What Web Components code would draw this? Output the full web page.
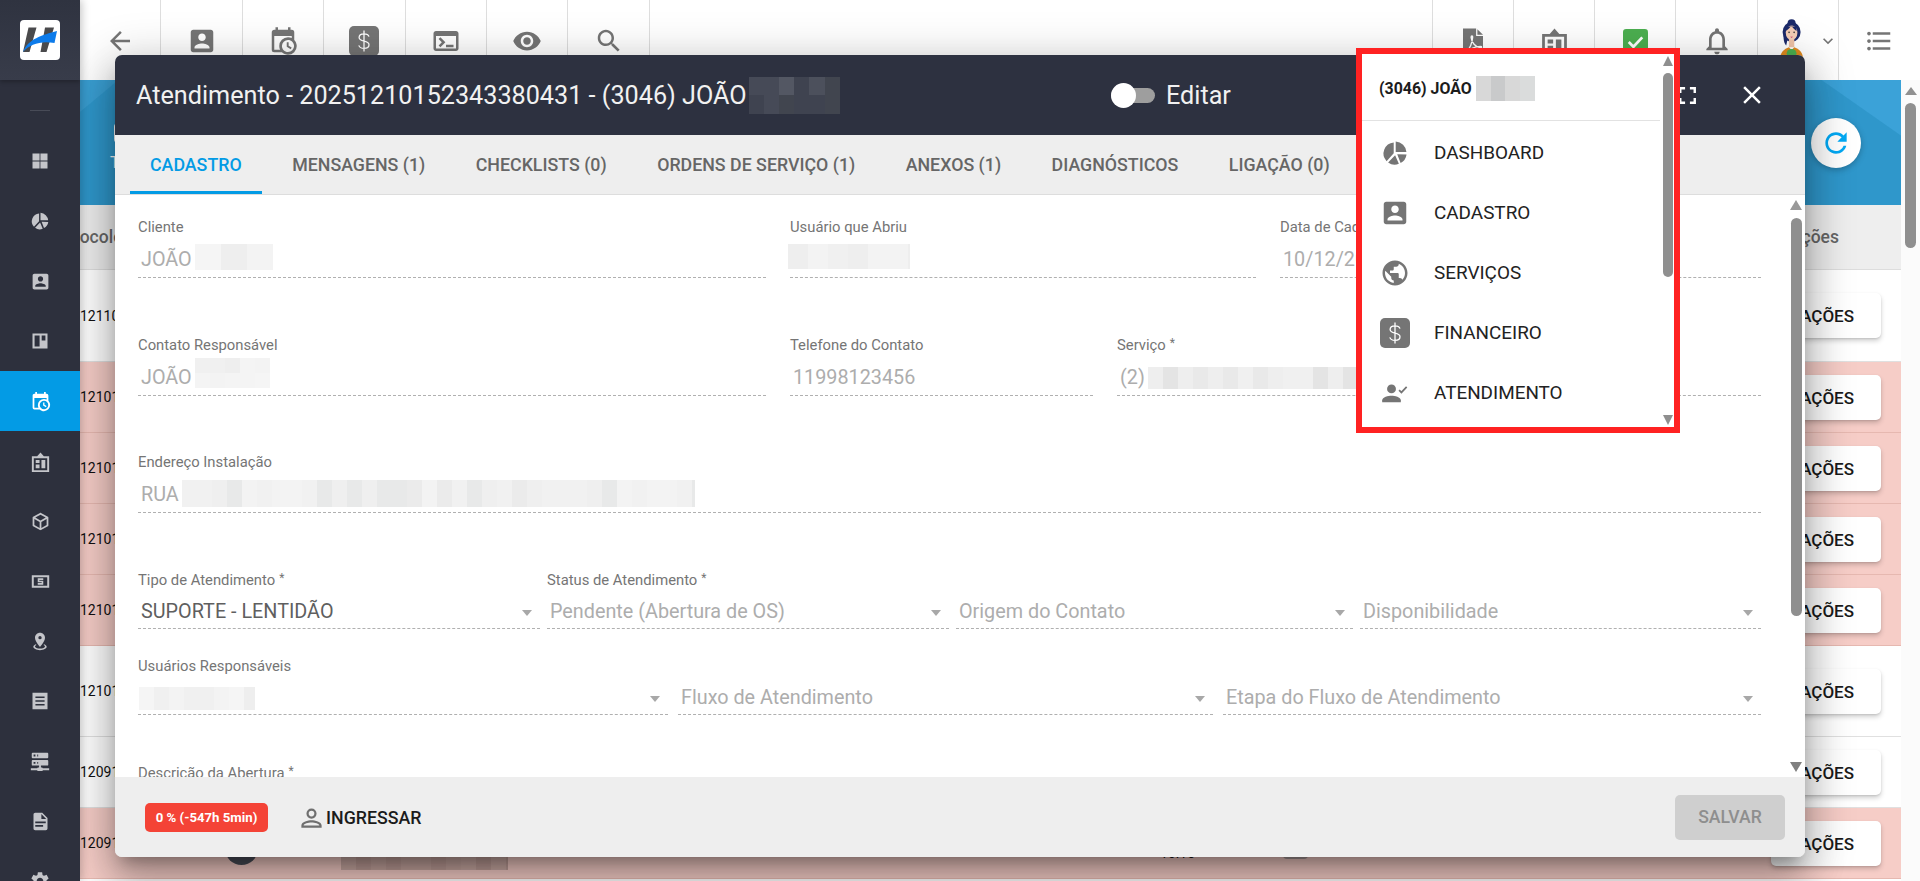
<!DOCTYPE html>
<html lang="pt-BR">
<head>
<meta charset="utf-8">
<title>Atendimento</title>
<style>
  html, body { margin: 0; height: 881px; overflow: hidden; background: #fff; font-family: Roboto, "Liberation Sans", sans-serif; }
</style>
</head>
<body>
<app-shell></app-shell>
<script>
const DOLLAR = `<rect width="30" height="30" rx="5" fill="currentColor"/><path d="M20 10.6c-.6-1.7-2.5-2.7-5-2.7-2.8 0-4.9 1.5-4.9 3.6 0 4.7 9.9 2.6 9.9 7.2 0 2.2-2.1 3.7-5 3.7-2.6 0-4.5-1.1-5.2-3M15 4.5v21" fill="none" stroke="#fff" stroke-width="1.3"/>`;

const ICONS = {
  back: `<path d="M20 11H7.83l5.59-5.59L12 4l-8 8 8 8 1.41-1.41L7.83 13H20v-2z"/>`,
  accountBox: `<path d="M3 5v14c0 1.1.89 2 2 2h14c1.1 0 2-.9 2-2V5c0-1.1-.9-2-2-2H5c-1.11 0-2 .9-2 2zm12 4c0 1.66-1.34 3-3 3s-3-1.34-3-3 1.34-3 3-3 3 1.34 3 3zm-9 8c0-2 4-3.1 6-3.1s6 1.1 6 3.1v1H6v-1z"/>`,
  calendarClock: `<path d="M15 13h1.5v2.82l2.44 1.41-.75 1.3L15 16.69V13m4-5H5v11h4.67c-.43-.91-.67-1.93-.67-3a7 7 0 0 1 7-7c1.07 0 2.09.24 3 .67V8M5 21a2 2 0 0 1-2-2V5c0-1.11.89-2 2-2h1V1h2v2h8V1h2v2h1a2 2 0 0 1 2 2v6.1c1.24 1.26 2 2.99 2 4.9a7 7 0 0 1-7 7c-1.91 0-3.64-.76-4.9-2H5m11-9.85A4.85 4.85 0 0 0 11.15 16c0 2.68 2.17 4.85 4.85 4.85A4.85 4.85 0 0 0 20.85 16c0-2.68-2.17-4.85-4.85-4.85z"/>`,
  terminal: `<path d="M20 4H4c-1.11 0-2 .9-2 2v12c0 1.1.89 2 2 2h16c1.1 0 2-.9 2-2V6c0-1.1-.9-2-2-2zm0 14H4V8h16v10zm-2-1h-6v-2h6v2zM7.5 17l-1.41-1.41L8.67 13l-2.59-2.59L7.5 9l4 4-4 4z"/>`,
  eye: `<path d="M12 4.5C7 4.5 2.73 7.61 1 12c1.73 4.39 6 7.5 11 7.5s9.27-3.11 11-7.5c-1.73-4.39-6-7.5-11-7.5zM12 17c-2.76 0-5-2.24-5-5s2.24-5 5-5 5 2.24 5 5-2.24 5-5 5zm0-8c-1.66 0-3 1.34-3 3s1.34 3 3 3 3-1.34 3-3-1.34-3-3-3z"/>`,
  search: `<path d="M15.5 14h-.79l-.28-.27C15.41 12.59 16 11.11 16 9.5 16 5.91 13.09 3 9.5 3S3 5.91 3 9.5 5.91 16 9.5 16c1.61 0 3.09-.59 4.23-1.57l.27.28v.79l5 4.99L20.49 19l-4.99-5zm-6 0C7.01 14 5 11.99 5 9.5S7.01 5 9.5 5 14 7.01 14 9.5 11.99 14 9.5 14z"/>`,
  bell: `<path d="M12 22c1.1 0 2-.9 2-2h-4c0 1.1.89 2 2 2zm6-6v-5c0-3.07-1.64-5.64-4.5-6.32V4c0-.83-.67-1.5-1.5-1.5s-1.5.67-1.5 1.5v.68C7.63 5.36 6 7.92 6 11v5l-2 2v1h16v-1l-2-2zm-2 1H8v-6c0-2.48 1.51-4.5 4-4.5s4 2.02 4 4.5v6z"/>`,
  list: `<path d="M4 10.5c-.83 0-1.5.67-1.5 1.5s.67 1.5 1.5 1.5 1.5-.67 1.5-1.5-.67-1.5-1.5-1.5zm0-6c-.83 0-1.5.67-1.5 1.5S3.17 7.5 4 7.5 5.5 6.83 5.5 6 4.83 4.5 4 4.5zm0 12c-.83 0-1.5.68-1.5 1.5s.68 1.5 1.5 1.5 1.5-.68 1.5-1.5-.67-1.5-1.5-1.5zM7 19h14v-2H7v2zm0-6h14v-2H7v2zm0-8v2h14V5H7z"/>`,
  pdf: `<path d="M4 2h10.500v6h5.500v15H4z"/><path d="M15.500 2.500l4.500 4.500h-4.500z"/><path d="M6.500 21c3-2.500 5-8 5.200-12 .1-1.500-1.200-1.500-1.200 0 .2 4 3.500 8 7.500 8.500 1.200.1 1.200-1.200 0-1.200-4 .1-8.500 1.800-11.500 4.700z" fill="none" stroke="#fff" stroke-width="1.100"/>`,
  building: `<path fill-rule="evenodd" d="M3 6.500h5.500L12 2.500l3.500 4H21V23H3zM5 8.500V21h14V8.500zM7 10.500h4v3H7zM13 10.500h4V19h-4zM7 15h4v4H7z"/>`,
  check: `<rect x="0" y="0" width="24" height="24" rx="3" fill="#4caf50"/><path d="M5.500 12.500l4.500 4.500 8.500-9" fill="none" stroke="#fff" stroke-width="2.600"/>`,
  chevron: `<path d="M7.410 8.590L12 13.170l4.590-4.580L18 10l-6 6-6-6z"/>`,
  windows: `<path d="M3 3h8.500v8.500H3zM12.500 3H21v8.500h-8.500zM3 12.500h8.500V21H3zM12.500 12.500H21V21h-8.500z"/>`,
  pie: `<path d="M10.900 3A9.500 9.500 0 0 0 4.800 19L10.900 12.300zM12.600 2.200A9.700 9.700 0 0 1 21.800 11.200H12.600zM13.900 13l8 .2A9.600 9.600 0 0 1 16.800 20.500zM6.100 20.200L12.100 13.900 15.300 21.300A9.600 9.600 0 0 1 6.100 20.200z"/>`,
  kanban: `<path fill-rule="evenodd" d="M3 3h18v18H3zM5.500 5.500v13h6v-13zM14 5.500v6h4.500v-6z"/>`,
  cube: `<path d="M21 16.500c0 .38-.21.71-.53.88l-7.900 4.440c-.16.12-.36.18-.57.18s-.41-.06-.57-.18l-7.900-4.440A.991.991 0 0 1 3 16.500v-9c0-.38.21-.71.53-.88l7.900-4.440c.16-.12.36-.18.57-.18s.41.06.57.18l7.900 4.440c.32.17.53.5.53.88v9M12 4.150L6.040 7.500 12 10.850l5.960-3.350L12 4.150M5 15.910l6 3.380v-6.710L5 9.210v6.700m14 0V9.210l-6 3.370v6.710l6-3.380z"/>`,
  money: `<path fill-rule="evenodd" d="M1 4h22v16H1zM3.500 6.500v11h17v-11z"/><path fill-rule="evenodd" d="M8.500 8h7v2h-5v1h5v5h-7v-2h5v-1h-5z"/>`,
  pin: `<path d="M12 2c3.310 0 6 2.660 6 5.950C18 12.410 12 19 12 19S6 12.410 6 7.950C6 4.660 8.690 2 12 2m0 4a2 2 0 1 0 0 4 2 2 0 0 0 0-4m8 13c0 2.210-3.580 4-8 4s-8-1.790-8-4c0-1.290 1.220-2.440 3.110-3.170l.64.91C6.670 17.190 6 17.810 6 18.500 6 19.880 8.690 21 12 21s6-1.120 6-2.500c0-.69-.67-1.310-1.750-1.760l.64-.91C18.780 16.560 20 17.710 20 19z"/>`,
  receipt: `<path fill-rule="evenodd" d="M3 2h18v20H3zM6.500 6.500v2h11v-2zM6.500 11v2h11v-2zM6.500 15.500v2h11v-2z"/>`,
  server: `<path d="M13 19h1a1 1 0 0 1 1 1h7v2h-7a1 1 0 0 1-1 1h-4a1 1 0 0 1-1-1H2v-2h7a1 1 0 0 1 1-1h1v-2H4a1 1 0 0 1-1-1v-4a1 1 0 0 1 1-1h16a1 1 0 0 1 1 1v4a1 1 0 0 1-1 1h-7v2M4 3h16a1 1 0 0 1 1 1v4a1 1 0 0 1-1 1H4a1 1 0 0 1-1-1V4a1 1 0 0 1 1-1m5 4h1V5H9v2m0 8h1v-2H9v2M5 5v2h2V5H5m0 8v2h2v-2H5z"/>`,
  doc: `<path d="M13 9h5.500L13 3.500V9M6 2h8l6 6v12a2 2 0 0 1-2 2H6c-1.110 0-2-.9-2-2V4c0-1.110.89-2 2-2m9 16v-2H6v2h9m3-4v-2H6v2h12z"/>`,
  gear: `<path d="M19.140 12.940c.04-.3.06-.61.06-.94 0-.32-.02-.64-.07-.94l2.030-1.580c.18-.14.23-.41.12-.61l-1.920-3.320c-.12-.22-.37-.29-.59-.22l-2.390.96c-.5-.38-1.030-.7-1.620-.94l-.36-2.540c-.04-.24-.24-.41-.48-.41h-3.840c-.24 0-.43.17-.47.41l-.36 2.540c-.59.24-1.130.57-1.620.94l-2.390-.96c-.22-.08-.47 0-.59.22L2.740 8.870c-.12.21-.08.47.12.61l2.030 1.580c-.05.3-.09.63-.09.94s.02.64.07.94l-2.030 1.580c-.18.14-.23.41-.12.61l1.920 3.320c.12.22.37.29.59.22l2.390-.96c.5.38 1.030.7 1.620.94l.36 2.540c.05.24.24.41.48.41h3.840c.24 0 .44-.17.47-.41l.36-2.540c.59-.24 1.130-.56 1.620-.94l2.390.96c.22.08.47 0 .59-.22l1.920-3.320c.12-.22.07-.47-.12-.61l-2.010-1.580zM12 15.600c-1.980 0-3.600-1.620-3.600-3.600s1.620-3.600 3.600-3.600 3.600 1.620 3.600 3.600-1.620 3.600-3.600 3.600z"/>`,
  refresh: `<path d="M17.650 6.350C16.200 4.900 14.210 4 12 4c-4.420 0-7.990 3.580-7.990 8s3.570 8 7.990 8c3.730 0 6.840-2.550 7.730-6h-2.080c-.82 2.330-3.040 4-5.650 4-3.310 0-6-2.690-6-6s2.690-6 6-6c1.660 0 3.140.69 4.220 1.780L13 11h7V4l-2.350 2.350z"/>`,
  fullscreen: `<path d="M7 14H5v5h5v-2H7v-3zm-2-4h2V7h3V5H5v5zm12 7h-3v2h5v-5h-2v3zM14 5v2h3v3h2V5h-5z"/>`,
  close: `<path d="M19 6.410L17.590 5 12 10.590 6.410 5 5 6.410 10.590 12 5 17.590 6.410 19 12 13.410 17.590 19 19 17.590 13.410 12z"/>`,
  globe: `<path d="M12 2C6.480 2 2 6.480 2 12s4.480 10 10 10 10-4.480 10-10S17.520 2 12 2zm-1 17.930c-3.950-.49-7-3.850-7-7.930 0-.62.08-1.210.21-1.790L9 15v1c0 1.100.9 2 2 2v1.930zm6.900-2.540c-.26-.81-1-1.390-1.900-1.390h-1v-3c0-.55-.45-1-1-1H8v-2h2c.55 0 1-.45 1-1V7h2c1.100 0 2-.9 2-2v-.41c2.930 1.190 5 4.060 5 7.410 0 2.080-.8 3.970-2.100 5.390z"/>`,
  personCheck: `<circle cx="9" cy="8.500" r="3.800"/><path d="M1 20v-1.800c0-2.700 5.300-3.900 8-3.900s8 1.200 8 3.900V20z"/><path d="M15.500 9.500l2 2 4.500-4.800" fill="none" stroke="currentColor" stroke-width="1.500"/>`,
  personOutline: `<path d="M12 4a4.500 4.500 0 1 1 0 9 4.500 4.500 0 0 1 0-9zm0 2a2.500 2.500 0 1 0 0 5 2.500 2.500 0 0 0 0-5zM12 14.500c3 0 9 1.500 9 4.500v2H3v-2c0-3 6-4.500 9-4.500zm0 2c-3 0-6.800 1.200-7 2.500h14c-.2-1.300-4-2.500-7-2.500z"/>`
};

// svg icon, name comes from the table above
class AppIcon extends HTMLElement {
  connectedCallback() {
    const size = this.getAttribute("size") || 24;
    const name = this.getAttribute("name");
    const box = name == "dollar" ? "0 0 30 30" : "0 0 24 24";
    const body = name == "dollar" ? DOLLAR : ICONS[name];
    this.attachShadow({ mode: "open" }).innerHTML = `
      <style>:host{display:inline-flex;line-height:0;flex:none;color:inherit}svg{fill:currentColor}</style>
      <svg width="${size}" height="${size}" viewBox="${box}">${body}</svg>`;
  }
}

// pixelated block standing in for the hidden personal data
class PixelBlur extends HTMLElement {
  connectedCallback() {
    const w = +this.getAttribute("w"), h = +this.getAttribute("h");
    const cw = +(this.getAttribute("cw") || 18);
    const rows = +(this.getAttribute("rows") || 2);
    const shades = this.getAttribute("shades").split(",");
    const cols = Math.ceil(w / cw);
    let cells = "", seed = w + h * 3;
    for (let i = 0; i < cols * rows; i++) {
      seed = (seed * 31 + 7) % 101;
      cells += `<i style="background:${shades[seed % shades.length]}"></i>`;
    }
    this.attachShadow({ mode: "open" }).innerHTML = `
      <style>
        :host{display:inline-grid;flex:none;width:${w}px;height:${h}px;overflow:hidden;
          grid-template-columns:repeat(${cols},${cw}px);grid-auto-rows:${h / rows}px}
        i{display:block}
      </style>${cells}`;
  }
}

class SideItem extends HTMLElement {
  connectedCallback() {
    const active = this.hasAttribute("active");
    this.attachShadow({ mode: "open" }).innerHTML = `
      <style>
        :host{display:flex;height:60px;align-items:center;justify-content:center;
          color:${active ? "#fff" : "#c4c5ca"};background:${active ? "#039be5" : "none"}}
      </style><slot></slot>`;
  }
}

class AppSidebar extends HTMLElement {
  connectedCallback() {
    const names = ["windows", "pie", "accountBox", "kanban", "calendarClock", "building", "cube", "money", "pin", "receipt", "server", "doc", "gear"];
    const sizes = { windows: 20, pie: 20, accountBox: 21, kanban: 20, calendarClock: 21, building: 23, cube: 21, money: 19, pin: 20, receipt: 20, server: 22, doc: 21, gear: 22 };
    this.attachShadow({ mode: "open" }).innerHTML = `
      <style>
        :host{display:block;width:80px;height:881px;background:#2d303d;position:relative;z-index:10;overflow:hidden;box-shadow:2px 0 8px rgba(0,0,0,.22)}
        .brand{height:80px;display:flex;align-items:center;justify-content:center;background:linear-gradient(#2f3340,#383c4a);box-shadow:0 2px 4px rgba(0,0,0,.25)}
        .rule{height:1px;width:20px;background:#484b57;margin:30px auto 20px}
      </style>
      <div class="brand">
        <svg width="40" height="40" viewBox="0 0 40 40">
          <rect width="40" height="40" rx="4" fill="#fff"/>
          <path d="M8.500 7.500h8L9.500 32H3z" fill="#4a4a4c"/>
          <path d="M25 7.500h9L26.500 32H20.500z" fill="#4a4a4c"/>
          <path d="M3 32C8 19 22 15 37 11L34.500 23C21 20.500 10 24 3 32z" fill="#0d7bea"/>
        </svg>
      </div>
      <div class="rule"></div>
      ${names.map(n => `<side-item ${n == "calendarClock" ? "active" : ""}><app-icon name="${n}" size="${sizes[n]}"></app-icon></side-item>`).join("")}`;
  }
}

class ToolCell extends HTMLElement {
  connectedCallback() {
    this.attachShadow({ mode: "open" }).innerHTML = `
      <style>
        :host{display:flex;flex:0 0 auto;width:81.2px;height:80px;box-sizing:border-box;align-items:center;justify-content:center;
          border-right:1px solid #dedede;color:#757575;padding-top:2px}
        :host([last]){border-right:0}
      </style><slot></slot>`;
  }
}

class AppToolbar extends HTMLElement {
  connectedCallback() {
    this.attachShadow({ mode: "open" }).innerHTML = `
      <style>
        :host{display:flex;height:80px;background:#fff;justify-content:space-between;position:relative;z-index:2}
        .group{display:flex}
        .left tool-cell{width:81.4px}
        .right{border-left:1px solid #dedede}
        .avatar{gap:14px;justify-content:flex-start;padding-left:21px;overflow:visible}
        .avatar svg{margin-top:-2px}
      </style>
      <div class="group left">
        <tool-cell><app-icon name="back" size="30"></app-icon></tool-cell>
        <tool-cell><app-icon name="accountBox" size="30"></app-icon></tool-cell>
        <tool-cell><app-icon name="calendarClock" size="30"></app-icon></tool-cell>
        <tool-cell><app-icon name="dollar" size="30"></app-icon></tool-cell>
        <tool-cell><app-icon name="terminal" size="30"></app-icon></tool-cell>
        <tool-cell><app-icon name="eye" size="30"></app-icon></tool-cell>
        <tool-cell><app-icon name="search" size="30"></app-icon></tool-cell>
      </div>
      <div class="group right">
        <tool-cell><app-icon name="pdf" size="30"></app-icon></tool-cell>
        <tool-cell><app-icon name="building" size="33"></app-icon></tool-cell>
        <tool-cell><app-icon name="check" size="25"></app-icon></tool-cell>
        <tool-cell><app-icon name="bell" size="32"></app-icon></tool-cell>
        <tool-cell class="avatar">
          <svg width="29" height="46" viewBox="0 0 28 46">
            <circle cx="14" cy="4.500" r="4.500" fill="#1c2a6a"/>
            <ellipse cx="14" cy="14" rx="10" ry="11" fill="#1c2a6a"/>
            <path d="M5 18c0 6 1 9 3 11l2-9z" fill="#1c2a6a"/>
            <path d="M11 21h6v10h-6z" fill="#efc2a6"/>
            <ellipse cx="14" cy="15" rx="6.500" ry="8.200" fill="#f4cdb5"/>
            <path d="M7.500 13c2-1 5-3 6-6 2 3 4 5 6 6V8H7.500z" fill="#1c2a6a"/>
            <circle cx="11.200" cy="14.500" r=".9" fill="#333"/><circle cx="16.800" cy="14.500" r=".9" fill="#333"/>
            <path d="M12.500 19.500h3l-1.500 1z" fill="#c2185b"/>
            <path d="M1 46c0-10 5-13 10-15l3 3 3-3c5 2 10 5 10 15z" fill="#e08a1e"/>
            <ellipse cx="14" cy="38" rx="5.500" ry="5" fill="#4caf50"/>
          </svg>
          <app-icon name="chevron" size="20"></app-icon>
        </tool-cell>
        <tool-cell last><app-icon name="list" size="30"></app-icon></tool-cell>
      </div>`;
  }
}

class PageBanner extends HTMLElement {
  connectedCallback() {
    this.attachShadow({ mode: "open" }).innerHTML = `
      <style>
        :host{display:block;height:125px;position:relative;overflow:hidden;color:#fff;font-size:16px;
          background:
            linear-gradient(to bottom left, #3ba2d8 0, #3ba2d8 45px, transparent 46px) right top / 100px 70px no-repeat,
            linear-gradient(to bottom right, #3a9fd3 0, #3a9fd3 24px, transparent 25px) left top / 60px 50px no-repeat,
            #2f97cb}
        .tile{position:absolute;left:34px;top:43px;width:20px;height:20px;background:#fff;border-radius:4px}
        .cap{position:absolute;left:30px;top:73px}
        .reload{position:absolute;right:40px;top:38px;width:50px;height:50px;border-radius:50%;background:#fff;color:#03a9f4;
          display:flex;align-items:center;justify-content:center;box-shadow:0 2px 6px rgba(0,0,0,.25)}
      </style>
      <div class="tile"></div>
      <div class="cap">Total</div>
      <div class="reload"><app-icon name="refresh" size="32"></app-icon></div>`;
  }
}

class TableRow extends HTMLElement {
  connectedCallback() {
    const h = this.getAttribute("height");
    const pink = this.hasAttribute("late");
    this.attachShadow({ mode: "open" }).innerHTML = `
      <style>
        :host{display:flex;height:${h}px;box-sizing:border-box;align-items:center;font-size:14px;color:#111;
          background:${pink ? "#f6cdc7" : "#fff"};border-bottom:1px solid ${pink ? "#e6b8b0" : "#e0e0e0"}}
        .num{width:145px;flex:none}
        .rest{flex:1;min-width:0;display:flex;align-items:center}
        button{all:unset;box-sizing:border-box;width:110px;height:45px;margin-right:20px;background:#fff;border-radius:5px;flex:none;
          text-align:right;padding-right:27px;font:500 17px/46px Roboto,sans-serif;color:#1a1a1a;
          box-shadow:0 3px 5px rgba(0,0,0,.18),0 1px 2px rgba(0,0,0,.1)}
      </style>
      <div class="num">${this.getAttribute("num")}</div>
      <div class="rest"><slot></slot></div>
      <button>AÇÕES</button>`;
  }
}

class DataTable extends HTMLElement {
  connectedCallback() {
    this.attachShadow({ mode: "open" }).innerHTML = `
      <style>
        :host{display:block;font-family:Roboto,sans-serif}
        .head{height:65px;box-sizing:border-box;display:flex;justify-content:space-between;align-items:center;background:#eee;
          border-bottom:1px solid #ddd;font-size:17.500px;font-weight:500;color:#666}
        .proto{margin-left:-33px}
        .acts{margin-right:62px}
        .extra{display:flex;align-items:flex-start;height:71px;gap:83px}
        .dot{width:33px;height:33px;border-radius:50%;background:#4b4f59;margin-top:24px}
        .blur{margin-top:36px}
        .when{margin-left:569px;line-height:20px;margin-top:15px;white-space:nowrap}
        .pill{width:25px;height:10px;background:#a99;border-radius:4px;margin:41px 0 0 -35px}
      </style>
      <div class="head"><span class="proto">Protocolo</span><span class="acts">Ações</span></div>
      <table-row height="92" num="12110"></table-row>
      <table-row height="71" late num="12101"></table-row>
      <table-row height="71" late num="12101"></table-row>
      <table-row height="71" late num="12101"></table-row>
      <table-row height="71" late num="12101"></table-row>
      <table-row height="91" num="12101"></table-row>
      <table-row height="71" num="12091"></table-row>
      <table-row height="71" late num="12091">
        <div class="extra">
          <div class="dot"></div>
          <pixel-blur class="blur" w="167" h="26" cw="15" rows="2" shades="#c9a8a2,#c2a09a,#cdaca6"></pixel-blur>
          <div class="when">10/12/2025<br>10:15</div>
          <div class="pill"></div>
        </div>
      </table-row>`;
  }
}

class PageScrollbar extends HTMLElement {
  connectedCallback() {
    this.attachShadow({ mode: "open" }).innerHTML = `
      <style>
        :host{display:flex;flex-direction:column;align-items:center;width:19px;height:801px;background:#fbfbfb;padding-top:7px;box-sizing:border-box}
        .up{width:0;height:0;border:6px solid transparent;border-top:0;border-bottom:8px solid #909090}
        .thumb{width:11px;height:145px;border-radius:6px;background:#8f8f8f;margin-top:8px}
      </style>
      <div class="up"></div><div class="thumb"></div>`;
  }
}

class FormField extends HTMLElement {
  connectedCallback() {
    const select = this.hasAttribute("select");
    const label = this.getAttribute("label");
    const strong = this.hasAttribute("strong");
    this.attachShadow({ mode: "open" }).innerHTML = `
      <style>
        :host{display:block;min-width:0;position:relative}
        .label{height:16px;line-height:16px;font-size:14.800px;color:#757575;white-space:nowrap}
        sup{font-size:12px;line-height:0;vertical-align:3px;margin-left:4px}
        .value{box-sizing:content-box;height:${select ? 32 : 33}px;padding:${select ? 8 : 9}px 0 0 3px;line-height:32px;font-size:19.800px;
          color:${strong ? "#5f5f5f" : "#adadad"};white-space:nowrap;border-bottom:1px dashed #b0b0b0;display:flex;align-items:${select ? "center" : "flex-start"};gap:3px}
        .caret{position:absolute;right:8px;top:38px;border:5.500px solid transparent;border-bottom:0;border-top:6px solid #a8a8a8}
      </style>
      <div class="label">${label ? label : ""}${this.hasAttribute("required") ? "<sup>*</sup>" : ""}</div>
      <div class="value"><slot></slot></div>
      ${select ? '<div class="caret"></div>' : ""}`;
  }
}

class CadastroForm extends HTMLElement {
  connectedCallback() {
    const pale = "#f3f3f3,#f5f5f5,#f0f0f0,#f4f4f4,#eeeeee";
    this.attachShadow({ mode: "open" }).innerHTML = `
      <style>
        :host{display:block;height:582px;overflow:hidden;position:relative;background:#fff;box-sizing:border-box;padding:24px 44px 0 23px;font-family:Roboto,sans-serif}
        .row{display:grid;gap:24px}
        .r1{grid-template-columns:628px 466px 1fr}
        .r2{grid-template-columns:628px 303px 1fr;margin-top:59px}
        .r3{margin-top:58px}
        .r4{grid-template-columns:402px 402px 397px 1fr;gap:7px;margin-top:59px}
        .r5{grid-template-columns:530px 535px 1fr;gap:10px;margin-top:29px}
        .r6{margin-top:50px}
        .bar{position:absolute;right:3px;top:0;width:12px;height:100%}
        .up,.down{position:absolute;left:0;width:0;height:0;border:6px solid transparent}
        .up{top:5px;border-top:0;border-bottom:10px solid #999}
        .down{bottom:5px;border-bottom:0;border-top:10px solid #808080}
        .thumb{position:absolute;top:23px;left:1px;width:11px;height:398px;border-radius:6px;background:#8f8f8f}
      </style>
      <div class="row r1">
        <form-field label="Cliente">JOÃO <pixel-blur w="78" h="26" cw="26" rows="1" shades="${pale}"></pixel-blur></form-field>
        <form-field label="Usuário que Abriu"><pixel-blur w="122" h="25" cw="20" rows="1" shades="${pale}" style="margin-left:-5px"></pixel-blur></form-field>
        <form-field label="Data de Cadastro">10/12/2025 15:23</form-field>
      </div>
      <div class="row r2">
        <form-field label="Contato Responsável">JOÃO <pixel-blur w="75" h="30" cw="15" rows="2" shades="${pale}" style="margin-top:-4px"></pixel-blur></form-field>
        <form-field label="Telefone do Contato">11998123456</form-field>
        <form-field label="Serviço" required>(2) <pixel-blur w="300" h="22" cw="15" rows="1" shades="#e9e9e9,#eeeeee,#e4e4e4,#f0f0f0" style="margin-top:5px"></pixel-blur></form-field>
      </div>
      <div class="row r3">
        <form-field label="Endereço Instalação">RUA <pixel-blur w="513" h="27" cw="15" rows="1" shades="#efefef,#ebebeb,#f3f3f3,#e8e9e9,#f1f1f1" style="margin-top:1px"></pixel-blur></form-field>
      </div>
      <div class="row r4">
        <form-field select strong required label="Tipo de Atendimento">SUPORTE - LENTIDÃO</form-field>
        <form-field select required label="Status de Atendimento">Pendente (Abertura de OS)</form-field>
        <form-field select>Origem do Contato</form-field>
        <form-field select>Disponibilidade</form-field>
      </div>
      <div class="row r5">
        <form-field select label="Usuários Responsáveis"><pixel-blur w="116" h="23" cw="15" rows="1" shades="${pale}" style="margin-left:-2px"></pixel-blur></form-field>
        <form-field select>Fluxo de Atendimento</form-field>
        <form-field select>Etapa do Fluxo de Atendimento</form-field>
      </div>
      <div class="row r6"><form-field required label="Descrição da Abertura"></form-field></div>
      <div class="bar"><div class="up"></div><div class="thumb"></div><div class="down"></div></div>`;
  }
}

class AtendimentoModal extends HTMLElement {
  connectedCallback() {
    const tabs = ["CADASTRO", "MENSAGENS (1)", "CHECKLISTS (0)", "ORDENS DE SERVIÇO (1)", "ANEXOS (1)", "DIAGNÓSTICOS", "LIGAÇÃO (0)"];
    this.attachShadow({ mode: "open" }).innerHTML = `
      <style>
        :host{position:absolute;left:115px;top:55px;width:1690px;height:802px;z-index:5;border-radius:7px;display:flex;flex-direction:column;
          font-family:Roboto,sans-serif;background:#eee;
          box-shadow:0 11px 15px -7px rgba(0,0,0,.3),0 24px 38px 3px rgba(0,0,0,.2),0 9px 46px 8px rgba(0,0,0,.18)}
        header{height:80px;flex:none;display:flex;align-items:center;background:#2d3140;color:#f1f1f1;border-radius:7px 7px 0 0;padding-left:21px;font-size:25.200px;box-sizing:border-box}
        .title{flex:0 0 975px;display:flex;align-items:center;gap:2px;white-space:nowrap}
        .switch{display:flex;align-items:center;gap:11px}
        .track{width:44px;height:15px;border-radius:8px;background:#9e9e9e;position:relative;margin:0}
        .knob{position:absolute;left:0;top:-5px;width:25px;height:25px;border-radius:50%;background:#fff}
        .icons{margin-left:auto;display:flex;align-items:center;gap:35px;padding-right:38px;color:#fff}
        nav{height:60px;flex:none;box-sizing:border-box;display:flex;gap:10.500px;padding-left:15px;background:#eee;border-bottom:1px solid #ddd}
        .tab{box-sizing:border-box;height:59px;line-height:60px;padding:0 20px;font-size:17.800px;font-weight:500;color:#666;white-space:nowrap}
        .tab.on{color:#039be5;border-bottom:3px solid #039be5}
        footer{flex:1;display:flex;align-items:center;background:#eee;border-radius:0 0 7px 7px;padding:0 20px 0 30px}
        .badge{background:#f44336;color:#fff;font-size:13.200px;font-weight:700;height:29px;line-height:29px;width:123px;text-align:center;border-radius:5px}
        .join{margin-left:30px;display:flex;align-items:center;gap:1px;font-size:17.800px;font-weight:500;color:#1b1b1b;margin-top:1px}
        .join app-icon{color:#6f6f6f}
        .save{margin-left:auto;width:110px;height:45px;line-height:45px;background:#cfcfcf;color:#8e8e8e;text-align:center;font-size:17.600px;font-weight:500;border-radius:5px}
      </style>
      <header>
        <div class="title">Atendimento - 20251210152343380431 - (3046) JOÃO <pixel-blur w="91" h="37" cw="15.200" rows="2" shades="#3f4350,#4c505c,#464a57,#535763,#41454f"></pixel-blur></div>
        <div class="switch"><div class="track"><div class="knob"></div></div><span>Editar</span></div>
        <div class="icons"><app-icon name="fullscreen" size="29"></app-icon><app-icon name="close" size="30"></app-icon></div>
      </header>
      <nav>${tabs.map((t, i) => `<div class="tab ${i == 0 ? "on" : ""}">${t}</div>`).join("")}</nav>
      <cadastro-form></cadastro-form>
      <footer>
        <div class="badge">0 % (-547h 5min)</div>
        <div class="join"><app-icon name="personOutline" size="27"></app-icon>INGRESSAR</div>
        <div class="save">SALVAR</div>
      </footer>`;
  }
}

class UserMenu extends HTMLElement {
  connectedCallback() {
    const items = [["DASHBOARD", "pie", 28], ["CADASTRO", "accountBox", 30], ["SERVIÇOS", "globe", 30], ["FINANCEIRO", "dollar", 30], ["ATENDIMENTO", "personCheck", 28]];
    this.attachShadow({ mode: "open" }).innerHTML = `
      <style>
        :host{position:absolute;left:1356px;top:48px;width:324px;height:385px;box-sizing:border-box;border:6px solid #ff2222;background:#fff;z-index:6;font-family:Roboto,sans-serif;overflow:hidden}
        .who{height:67px;box-sizing:border-box;margin-right:14px;padding:3px 0 0 17px;border-bottom:1px solid #e2e2e2;display:flex;align-items:center;gap:4px;font-size:15.900px;font-weight:700;color:#1c1c1c;white-space:nowrap}
        .item{height:60px;box-sizing:border-box;display:flex;align-items:center;padding:2px 0 0 23px;font-size:18.900px;color:#222;margin-right:14px}
        .ico{width:30px;display:flex;justify-content:center;margin-right:24px;color:#757575;margin-left:-5px;margin-top:2px}
        .bar{position:absolute;right:0;top:0;bottom:0;width:11px;background:#fff}
        .up,.down{position:absolute;left:0;width:0;height:0;border:5.500px solid transparent}
        .up{top:2px;border-top:0;border-bottom:10px solid #8f8f8f}
        .down{bottom:2px;border-bottom:0;border-top:10px solid #8f8f8f}
        .thumb{position:absolute;top:19px;left:0;width:10px;height:204px;border-radius:5px;background:#8f8f8f}
      </style>
      <div class="who">(3046) JOÃO <pixel-blur w="59" h="25" cw="14.800" rows="1" shades="#d8d8d8,#c9cacb,#d0d0d0,#dadcdc"></pixel-blur></div>
      ${items.map(i => `<div class="item"><span class="ico"><app-icon name="${i[1]}" size="${i[2]}"></app-icon></span>${i[0]}</div>`).join("")}
      <div class="bar"><div class="up"></div><div class="thumb"></div><div class="down"></div></div>`;
  }
}

class AppShell extends HTMLElement {
  connectedCallback() {
    this.attachShadow({ mode: "open" }).innerHTML = `
      <style>
        :host{display:flex;position:relative;width:1920px;height:881px;overflow:hidden;font-family:Roboto,sans-serif}
        main{flex:1;min-width:0;display:flex;flex-direction:column}
        .page{flex:1;display:flex;min-height:0}
        .content{flex:1;min-width:0;overflow:hidden}
      </style>
      <app-sidebar></app-sidebar>
      <main>
        <app-toolbar></app-toolbar>
        <div class="page">
          <div class="content"><page-banner></page-banner><data-table></data-table></div>
          <page-scrollbar></page-scrollbar>
        </div>
      </main>
      <atendimento-modal></atendimento-modal>
      <user-menu></user-menu>`;
  }
}

customElements.define("app-icon", AppIcon);
customElements.define("pixel-blur", PixelBlur);
customElements.define("side-item", SideItem);
customElements.define("app-sidebar", AppSidebar);
customElements.define("tool-cell", ToolCell);
customElements.define("app-toolbar", AppToolbar);
customElements.define("page-banner", PageBanner);
customElements.define("table-row", TableRow);
customElements.define("data-table", DataTable);
customElements.define("page-scrollbar", PageScrollbar);
customElements.define("form-field", FormField);
customElements.define("cadastro-form", CadastroForm);
customElements.define("atendimento-modal", AtendimentoModal);
customElements.define("user-menu", UserMenu);
customElements.define("app-shell", AppShell);
</script>
</body>
</html>
